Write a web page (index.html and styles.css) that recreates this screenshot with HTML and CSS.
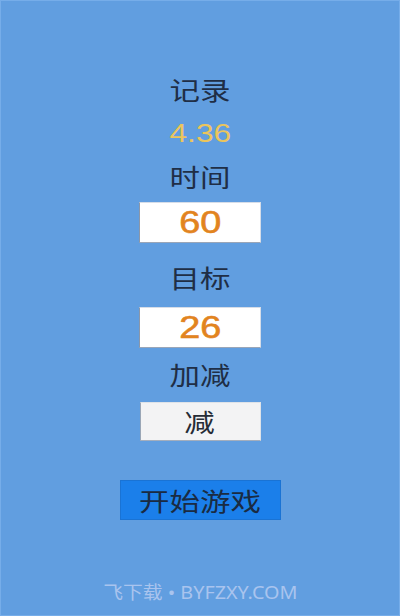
FILE: index.html
```html
<!DOCTYPE html>
<html lang="zh-CN">
<head>
  <meta charset="UTF-8">
  <meta name="viewport" content="width=device-width, initial-scale=1.0">
  <title>算术游戏</title>
  <link rel="stylesheet" href="styles.css">
</head>
<body>
  <div class="game-container">
    <div class="label label-record"><span class="wide">记录</span></div>
    <div class="record"><span class="wide">4.36</span></div>
    <div class="label label-time"><span class="wide">时间</span></div>
    <div class="value-box box-time"><span class="wide">60</span></div>
    <div class="label label-target"><span class="wide">目标</span></div>
    <div class="value-box box-target"><span class="wide">26</span></div>
    <div class="label label-mode"><span class="wide">加减</span></div>
    <button class="mode-button" type="button"><span class="wide">减</span></button>
    <button class="start-button" type="button"><span class="wide">开始游戏</span></button>
    <div class="footer"><span class="footer-text">飞下载 • BYFZXY.COM</span></div>
  </div>
</body>
</html>
```

FILE: styles.css
```css
body {
  margin: 0;
  padding: 0;
  background-color: #619ee0;
  font-family: 'Liberation Sans', 'Noto Sans CJK SC', sans-serif;
  color: #1f2e46;
}
.game-container {
  height: 614px;
  border: 1px solid #76ade9;
  display: flex;
  flex-direction: column;
  align-items: center;
}
.wide {
  display: inline-block;
  transform: scaleX(1.22);
}
.label {
  font-family: 'Noto Sans CJK SC', sans-serif;
  font-size: 25px;
  line-height: 26px;
  height: 30px;
}
.label-record {
  margin-top: 75px;
}
.record {
  margin-top: 12px;
  font-size: 26px;
  line-height: 30px;
  height: 30px;
  color: #ebc55c;
}
.label-time {
  margin-top: 15px;
}
.value-box {
  box-sizing: border-box;
  width: 122px;
  height: 41px;
  background: #fff;
  border: 1px solid #d6dde8;
  border-left-color: #8a97aa;
  border-bottom-color: #9aa6b8;
  color: #e2841f;
  font-size: 31px;
  line-height: 39px;
  text-align: center;
  -webkit-text-stroke: 0.6px #e2841f;
}
.box-time {
  margin-top: 9px;
}
.label-target {
  margin-top: 21px;
}
.box-target {
  margin-top: 13px;
}
.label-mode {
  margin-top: 13px;
}
.mode-button {
  box-sizing: border-box;
  margin-top: 11px;
  width: 121px;
  height: 39px;
  padding: 0;
  background: #f3f3f4;
  border: 1px solid #dfe3e8;
  border-left-color: #9aa6b6;
  border-bottom-color: #a4aebd;
  font-family: 'Noto Sans CJK SC', sans-serif;
  font-size: 25px;
  line-height: 35px;
  color: #262c36;
}
.start-button {
  box-sizing: border-box;
  margin-top: 39px;
  width: 161px;
  height: 40px;
  padding: 0;
  background: #1b7fea;
  border: 1px solid #1a73d4;
  font-family: 'Noto Sans CJK SC', sans-serif;
  font-size: 25px;
  line-height: 36px;
  color: #1a2b42;
}
.footer {
  margin-top: auto;
  margin-bottom: 11px;
  font-family: 'Noto Sans', 'Noto Sans CJK SC', sans-serif;
  font-size: 18px;
  color: #a9c4ee;
}
.footer-text {
  display: inline-block;
  transform: scaleX(1.1);
}
```
